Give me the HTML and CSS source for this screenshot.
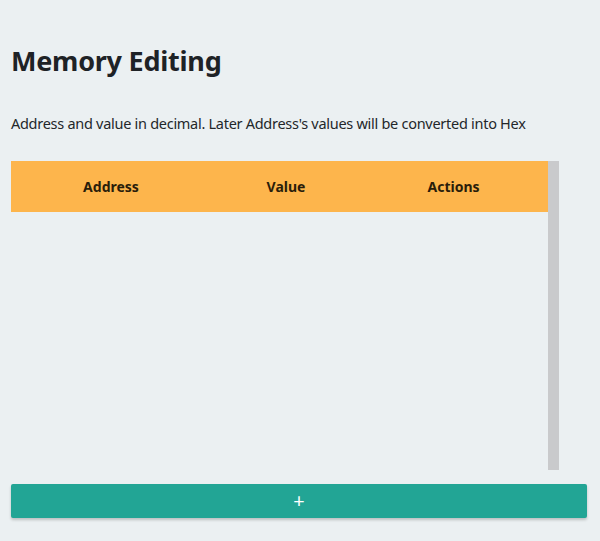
FILE: index.html
```html
<!DOCTYPE html>
<html>
<head>
<meta charset="utf-8">
<link rel="stylesheet" href="styles.css">
</head>
<body>
<main class="page">
  <h1 class="title">Memory Editing</h1>
  <p class="desc">Address and value in decimal. Later Address's values will be converted into Hex</p>
  <div class="table-wrap">
    <div class="table-scroll">
      <table class="mem-table">
        <thead>
          <tr>
            <th class="col-addr">Address</th>
            <th class="col-val">Value</th>
            <th class="col-act">Actions</th>
          </tr>
        </thead>
        <tbody></tbody>
      </table>
    </div>
    <div class="scrollbar"></div>
  </div>
  <button class="add-btn">+</button>
</main>
</body>
</html>
```

FILE: styles.css
```css
html, body {
  margin: 0;
  padding: 0;
}
body {
  background: #ebf0f2;
  font-family: "Noto Sans", "DejaVu Sans", sans-serif;
  color: #1f2326;
  width: 600px;
  height: 541px;
  overflow: hidden;
}
.page {
  padding: 40px 13px 0 11px;
}
.title {
  margin: 0;
  font-size: 27px;
  font-weight: 700;
  line-height: 42px;
  letter-spacing: -0.25px;
  color: #1e2226;
}
.desc {
  margin: 31px 0 0 0;
  font-size: 14.5px;
  line-height: 20px;
  letter-spacing: -0.28px;
  color: #23272a;
}
.table-wrap {
  margin-top: 28px;
  width: 548px;
  height: 309px;
  display: flex;
}
.table-scroll {
  flex: 1;
  overflow: hidden;
}
.scrollbar {
  width: 11px;
  background: #c9cacc;
}
.mem-table {
  width: 100%;
  border-collapse: collapse;
}
.mem-table th {
  background: #fdb54c;
  height: 51px;
  padding: 0;
  font-size: 14px;
  font-weight: 700;
  color: #2a1d0a;
}
.col-addr { width: 200px; }
.col-val { width: 150px; }
.mem-table .col-act { padding-right: 2px; }
.add-btn {
  display: block;
  margin-top: 14px;
  width: 576px;
  height: 34px;
  border: none;
  border-radius: 2px;
  background: #22a595;
  color: #fff;
  font-family: "Noto Sans", sans-serif;
  font-size: 20px;
  line-height: 34px;
  padding: 0;
  box-shadow: 0 2px 3px rgba(0,0,0,0.2);
}
```
